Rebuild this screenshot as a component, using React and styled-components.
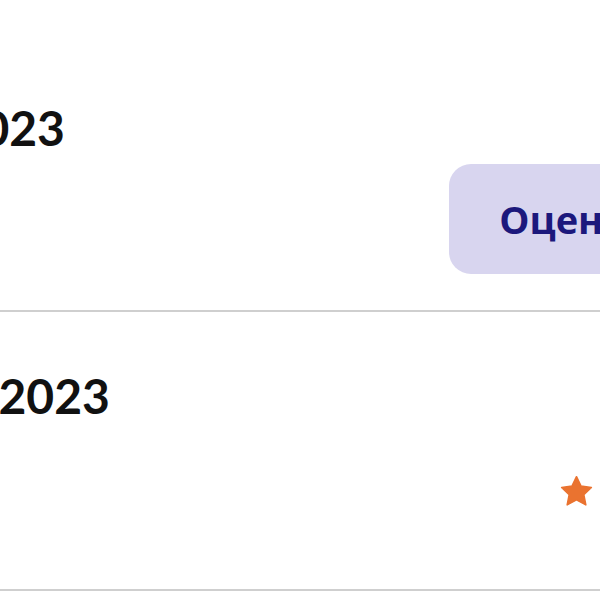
import React from "react";
import styled, { createGlobalStyle } from "styled-components";

const Global = createGlobalStyle`
  html, body { margin: 0; padding: 0; background: #ffffff; }
  body { font-family: Lato, Roboto, "Noto Sans", sans-serif; color: #111111; }
`;

const Page = styled.div`
  width: 600px;
  height: 600px;
  overflow: hidden;
  background: #ffffff;
`;

const List = styled.div`
  margin: 0 -125px 0 -284px;
  padding-top: 44px;
`;

const Row = styled.div`
  display: flex;
  flex-direction: column;
  padding: 56px 0 ${(p) => p.$bottom}px;
  border-bottom: 2px solid #cfcfcf;
`;

const Title = styled.div`
  font-size: 48px;
  line-height: 56px;
  font-weight: 700;
  color: #111111;
  white-space: nowrap;
`;

const Footer = styled.div`
  display: flex;
  justify-content: space-between;
  align-items: center;
  height: 110px;
  margin-top: ${(p) => p.$gap}px;
`;

const Meta = styled.div`
  font-size: 20px;
  color: #8a8a8a;
`;

const RateButton = styled.button`
  height: 110px;
  padding: 0 50px;
  border: none;
  border-radius: 22px;
  background: #d8d5ef;
  color: #1c187c;
  font-family: "Open Sans", Lato, sans-serif;
  font-size: 38px;
  font-weight: 700;
  cursor: pointer;
`;

const Rating = styled.div`
  display: flex;
  align-items: center;
  gap: 35px;
  font-size: 48px;
  font-weight: 700;
  color: #111111;
`;

const Star = () => (
  <svg width="37" height="37" viewBox="0 0 24 24" aria-hidden="true">
    <path
      d="M12 2.4l2.95 6.1 6.7.9-4.9 4.6 1.3 6.7L12 17.45 5.95 20.7l1.3-6.7-4.9-4.6 6.7-.9z"
      fill="#ea7330"
      stroke="#ea7330"
      strokeWidth="1"
      strokeLinejoin="round"
    />
  </svg>
);

export default function App() {
  return (
    <>
      <Global />
      <Page>
        <List>
          <Row $bottom={36}>
            <Title>13 ноября 2023</Title>
            <Footer $gap={8}>
              <Meta>2 товара</Meta>
              <RateButton>Оценить</RateButton>
            </Footer>
          </Row>
          <Row $bottom={43}>
            <Title>28 сентября 2023</Title>
            <Footer $gap={12}>
              <Meta>5 товаров</Meta>
              <Rating>
                <Star />
                <span>4,85</span>
              </Rating>
            </Footer>
          </Row>
        </List>
      </Page>
    </>
  );
}
